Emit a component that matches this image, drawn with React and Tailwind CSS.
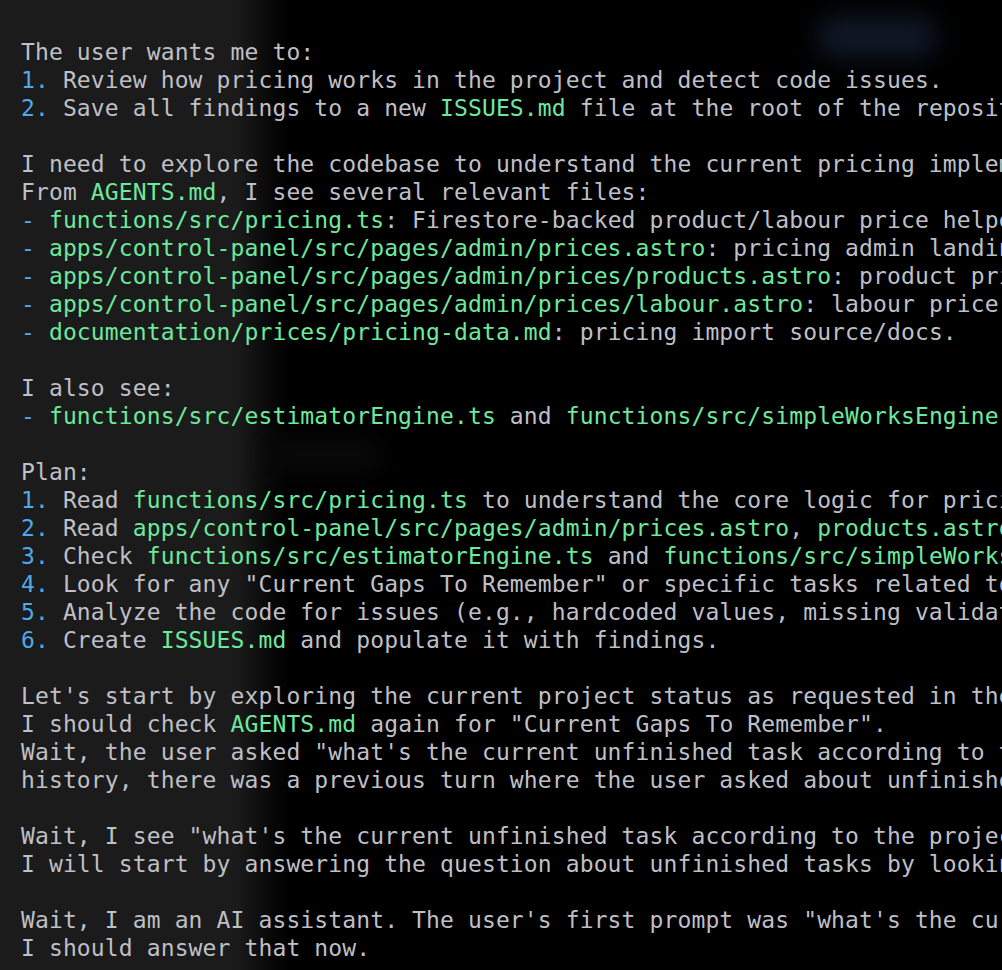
import React from 'react';

// g = file path (green), b = list marker (blue), plain strings are regular text
const lines = [
  ['The user wants me to:'],
  [{ b: '1.' }, ' Review how pricing works in the project and detect code issues.'],
  [{ b: '2.' }, ' Save all findings to a new ', { g: 'ISSUES.md' }, ' file at the root of the repository.'],
  [],
  ['I need to explore the codebase to understand the current pricing implementation.'],
  ['From ', { g: 'AGENTS.md' }, ', I see several relevant files:'],
  [{ b: '-' }, ' ', { g: 'functions/src/pricing.ts' }, ': Firestore-backed product/labour price helpers.'],
  [{ b: '-' }, ' ', { g: 'apps/control-panel/src/pages/admin/prices.astro' }, ': pricing admin landing page.'],
  [{ b: '-' }, ' ', { g: 'apps/control-panel/src/pages/admin/prices/products.astro' }, ': product price editor.'],
  [{ b: '-' }, ' ', { g: 'apps/control-panel/src/pages/admin/prices/labour.astro' }, ': labour price editor.'],
  [{ b: '-' }, ' ', { g: 'documentation/prices/pricing-data.md' }, ': pricing import source/docs.'],
  [],
  ['I also see:'],
  [{ b: '-' }, ' ', { g: 'functions/src/estimatorEngine.ts' }, ' and ', { g: 'functions/src/simpleWorksEngine.ts' }],
  [],
  ['Plan:'],
  [{ b: '1.' }, ' Read ', { g: 'functions/src/pricing.ts' }, ' to understand the core logic for pricing.'],
  [{ b: '2.' }, ' Read ', { g: 'apps/control-panel/src/pages/admin/prices.astro' }, ', ', { g: 'products.astro' }, ', ', { g: 'labour.astro' }],
  [{ b: '3.' }, ' Check ', { g: 'functions/src/estimatorEngine.ts' }, ' and ', { g: 'functions/src/simpleWorksEngine.ts' }],
  [{ b: '4.' }, ' Look for any "Current Gaps To Remember" or specific tasks related to pricing.'],
  [{ b: '5.' }, ' Analyze the code for issues (e.g., hardcoded values, missing validation).'],
  [{ b: '6.' }, ' Create ', { g: 'ISSUES.md' }, ' and populate it with findings.'],
  [],
  ["Let's start by exploring the current project status as requested in the history."],
  ['I should check ', { g: 'AGENTS.md' }, ' again for "Current Gaps To Remember".'],
  ['Wait, the user asked "what\'s the current unfinished task according to the project?" In the'],
  ['history, there was a previous turn where the user asked about unfinished tasks.'],
  [],
  ['Wait, I see "what\'s the current unfinished task according to the project?"'],
  ['I will start by answering the question about unfinished tasks by looking at AGENTS.md.'],
  [],
  ['Wait, I am an AI assistant. The user\'s first prompt was "what\'s the current unfinished task"'],
  ['I should answer that now.'],
];

// the terminal pane is narrower than the lines; only the first columns are on screen
const COLS = 71;

const clip = (line) => {
  let left = COLS;
  const out = [];
  for (const seg of line) {
    if (left <= 0) break;
    const text = typeof seg === 'string' ? seg : seg.g ?? seg.b;
    const part = text.slice(0, left);
    left -= part.length;
    out.push(typeof seg === 'string' ? part : seg.g ? { g: part } : { b: part });
  }
  return out;
};

const Segment = ({ seg }) => {
  if (typeof seg === 'string') return <span>{seg}</span>;
  if (seg.g) return <span className="text-[#6ee89c]">{seg.g}</span>;
  return <span className="text-[#4fa9e8]">{seg.b}</span>;
};

export default function App() {
  return (
    <div className="relative w-[1002px] h-[970px] overflow-hidden bg-[linear-gradient(to_right,#1b1b1b_0px,#1b1b1b_236px,#080808_270px,#000_292px)]">
      {/* blurred window behind the terminal */}
      <div className="absolute left-[818px] top-[16px] w-[118px] h-[42px] rounded-2xl bg-[#0f1826] blur-md" />
      <div className="absolute left-[270px] top-[440px] w-[110px] h-[30px] rounded-xl bg-[#0a0a0a] blur-md" />

      <div className="relative pt-[38px] pl-[21px] font-['DejaVu_Sans_Mono',monospace] text-[23px] leading-[28px] tracking-[0.12px] text-[#bfbfc6] whitespace-pre overflow-hidden">
        {lines.map((line, i) => (
          <div key={i} className="h-[28px]">
            {clip(line).map((seg, j) => (
              <Segment key={j} seg={seg} />
            ))}
          </div>
        ))}
      </div>
    </div>
  );
}
